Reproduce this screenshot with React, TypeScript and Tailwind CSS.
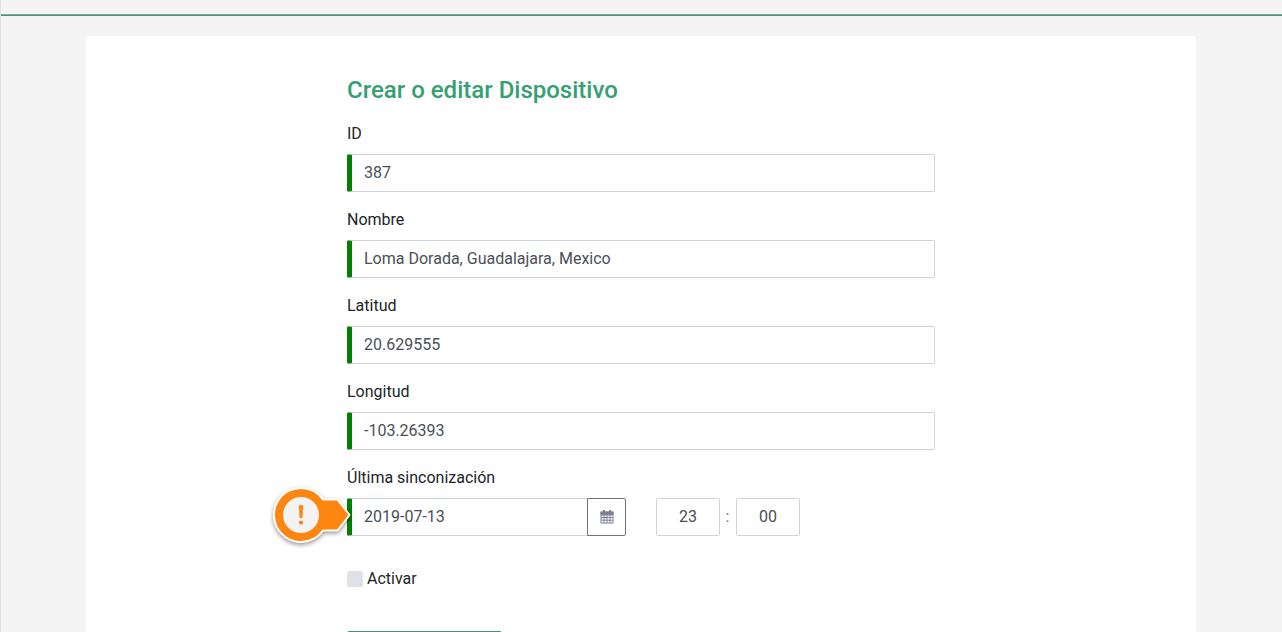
const FONT = "font-['Roboto',sans-serif]";

function Field({ label, value }: { label: string; value: string }) {
  return (
    <div className="mb-[16px]">
      <label className="block h-[24px] mb-[8px] text-[16px] leading-[24px] text-[#212529]">{label}</label>
      <input
        readOnly
        value={value}
        className="block w-[588px] h-[38px] pl-[12px] pr-3 pb-[2px] bg-white border border-[#ced4da] border-l-[5px] border-l-[#008000] rounded-[2px] text-[16px] text-[#495057] outline-none"
      />
    </div>
  );
}

function CalendarIcon() {
  return (
    <svg width="14" height="15" viewBox="0 0 14 15" fill="none" stroke="#7f8196" strokeWidth="1" className="mb-[1px]">
      <rect x="1" y="3" width="12" height="11" fill="#fff" />
      <path d="M1 3h12v3H1z" fill="#7f8196" />
      <path d="M1 8.5h12M1 11.2h12M4 6v8M7 6v8M10 6v8" />
      <path d="M4 1v3M10 1v3" strokeWidth="2" />
    </svg>
  );
}

function WarningBadge() {
  return (
    <div className="absolute left-[-74px] top-[-13px] w-[78px] h-[60px] drop-shadow-[0_2px_2px_rgba(0,0,0,0.4)]">
      <svg width="78" height="60" viewBox="0 0 78 60">
        <path d="M28 3a27 27 0 0 1 22 11.5h14.5L76.5 30 64.5 45.5H50A27 27 0 1 1 28 3Z" fill="#fd8510" stroke="#fff" strokeWidth="2" strokeLinejoin="round" />
        <circle cx="28" cy="30" r="18" fill="#f3f3f3" />
        <path d="M26 20.5h4l-.9 12.5h-2.2Z" fill="#fd8510" stroke="#fd8510" strokeWidth="0.5" strokeLinejoin="round" />
        <circle cx="28" cy="37.6" r="2.1" fill="#fd8510" />
      </svg>
    </div>
  );
}

export default function App() {
  return (
    <div className={`${FONT} h-[632px] overflow-hidden bg-[#f4f4f4] border-l border-l-[#e2e2e2]`}>
      <div className="h-[16px] border-b border-b-[#2ea37a]">
        <div className="h-[15px] border-b border-b-[#9a9a9a]" />
      </div>
      <main className="ml-[85px] mt-[20px] w-[1110px] h-[700px] bg-white rounded-t-[3px] pl-[261px] pt-[40px]">
        <h1 className="h-[28px] mb-[18px] text-[24px] leading-[28px] font-medium text-[#35a072] whitespace-nowrap">Crear o editar Dispositivo</h1>
        <Field label="ID" value="387" />
        <Field label="Nombre" value="Loma Dorada, Guadalajara, Mexico" />
        <Field label="Latitud" value="20.629555" />
        <Field label="Longitud" value="-103.26393" />
        <label className="block h-[24px] mb-[8px] text-[16px] leading-[24px] text-[#212529]">Última sinconización</label>
        <div className="flex items-center">
          <div className="relative flex w-[279px]">
            <WarningBadge />
            <input
              readOnly
              value="2019-07-13"
              className="w-[241px] h-[38px] pl-[12px] pb-[2px] bg-white border border-[#ced4da] border-l-[5px] border-l-[#008000] border-r-0 rounded-l-[2px] text-[16px] text-[#495057] outline-none"
            />
            <button className="flex items-center justify-center w-[39px] h-[38px] bg-white border border-[#6c757d] rounded-r-[2px]">
              <CalendarIcon />
            </button>
          </div>
          <input readOnly value="23" className="ml-[30px] w-[64px] h-[38px] pb-[2px] bg-white border border-[#ced4da] rounded-[2px] text-center text-[16px] text-[#495057] outline-none" />
          <span className="w-[16px] pr-[1px] text-center text-[16px] text-[#6c757d]">:</span>
          <input readOnly value="00" className="w-[64px] h-[38px] pb-[2px] bg-white border border-[#ced4da] rounded-[2px] text-center text-[16px] text-[#495057] outline-none" />
        </div>
        <div className="flex items-center mt-[31px] h-[24px]">
          <span className="w-[16px] h-[16px] rounded-[2px] bg-[#dee2e6]" />
          <span className="ml-[4px] text-[16px] leading-[24px] text-[#212529]">Activar</span>
        </div>
        <button className="block mt-[40px] w-[155px] h-[38px] bg-white border border-[#3a9a70] rounded-[2px]" />
      </main>
    </div>
  );
}
